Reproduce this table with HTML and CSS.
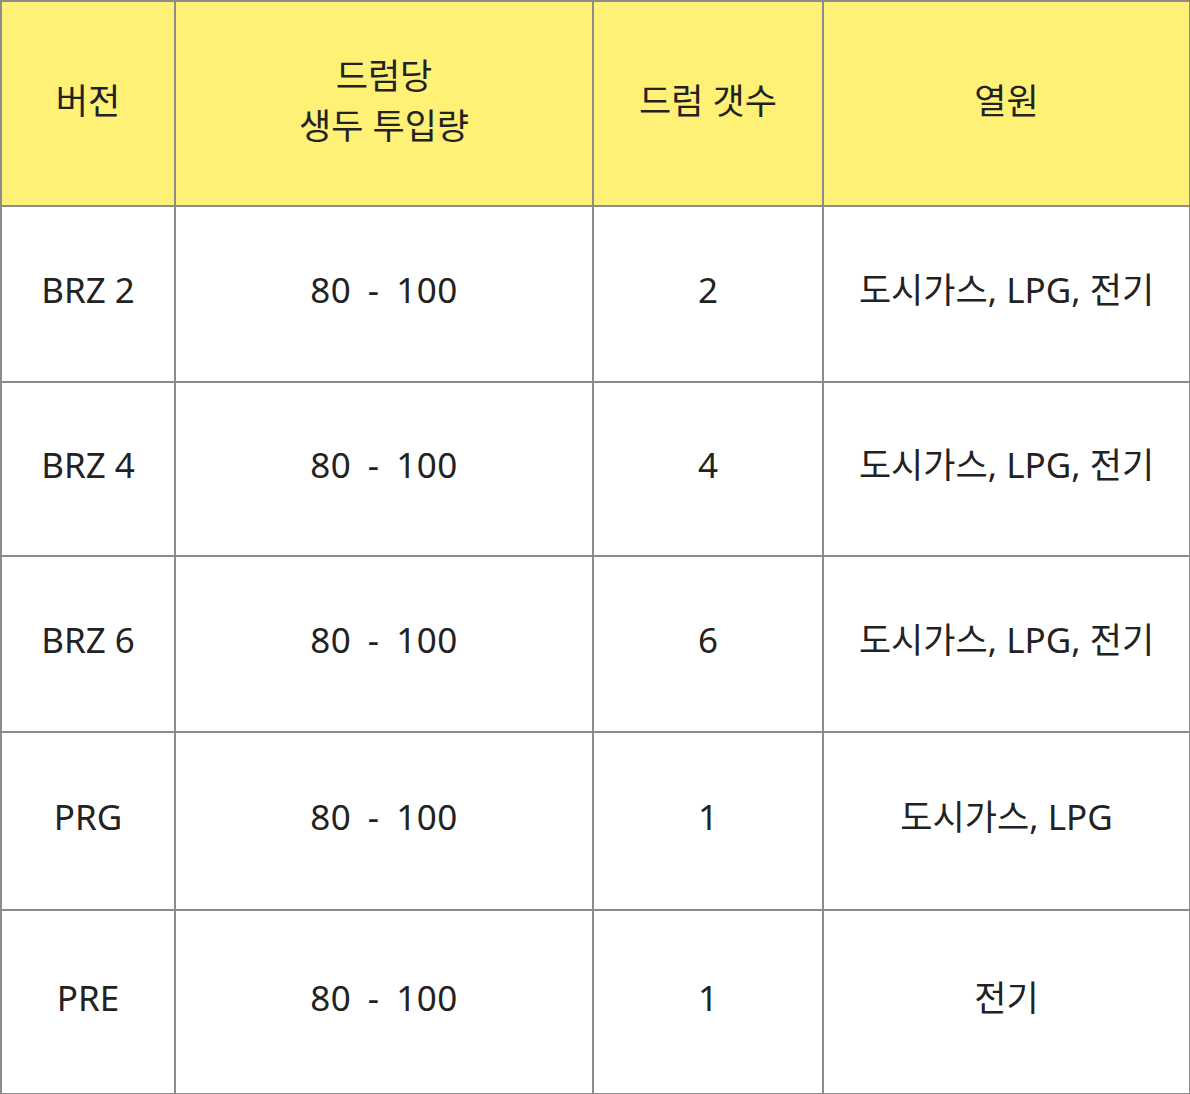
FILE: index.html
```html
<!DOCTYPE html>
<html lang="ko">
<head>
<meta charset="utf-8">
<link rel="stylesheet" href="styles.css">
</head>
<body>
<table class="spec">
  <colgroup>
    <col class="c1"><col class="c2"><col class="c3"><col class="c4">
  </colgroup>
  <thead>
    <tr class="r-head">
      <th>버전</th>
      <th>드럼당<br>생두 투입량</th>
      <th>드럼 갯수</th>
      <th>열원</th>
    </tr>
  </thead>
  <tbody>
    <tr class="r1"><td class="lat">BRZ 2</td><td class="lat num">80 - 100</td><td class="lat">2</td><td>도시가스<span class="lat">, LPG, </span>전기</td></tr>
    <tr class="r2"><td class="lat">BRZ 4</td><td class="lat num">80 - 100</td><td class="lat">4</td><td>도시가스<span class="lat">, LPG, </span>전기</td></tr>
    <tr class="r3"><td class="lat">BRZ 6</td><td class="lat num">80 - 100</td><td class="lat">6</td><td>도시가스<span class="lat">, LPG, </span>전기</td></tr>
    <tr class="r4"><td class="lat">PRG</td><td class="lat num">80 - 100</td><td class="lat">1</td><td>도시가스<span class="lat">, LPG</span></td></tr>
    <tr class="r5"><td class="lat">PRE</td><td class="lat num">80 - 100</td><td class="lat">1</td><td>전기</td></tr>
  </tbody>
</table>
</body>
</html>
```
FILE: styles.css
```css
html, body {
  margin: 0;
  padding: 0;
  background: #ffffff;
}
.spec {
  border-collapse: collapse;
  table-layout: fixed;
  width: 1189px;
  font-family: "Noto Sans", "Noto Sans CJK KR", sans-serif;
  font-size: 35px;
  line-height: 50px;
  color: #222222;
}
.c1 { width: 174px; }
.c2 { width: 418px; }
.c3 { width: 230px; }
.c4 { width: 367px; }
.spec th, .spec td {
  border: 2px solid #8c8c8c;
  padding: 0 0 9px 0;
  text-align: center;
  vertical-align: middle;
  font-weight: 400;
}
.spec th {
  background: #fff176;
  padding-bottom: 6px;
}
.spec .lat {
  font-size: 35px;
}
.spec .num {
  word-spacing: 7px;
  letter-spacing: 0.5px;
}
.r-head { height: 205px; }
.r1 { height: 176px; }
.r2 { height: 174px; }
.r3 { height: 176px; }
.r4 { height: 178px; }
.r5 { height: 184px; }
```
